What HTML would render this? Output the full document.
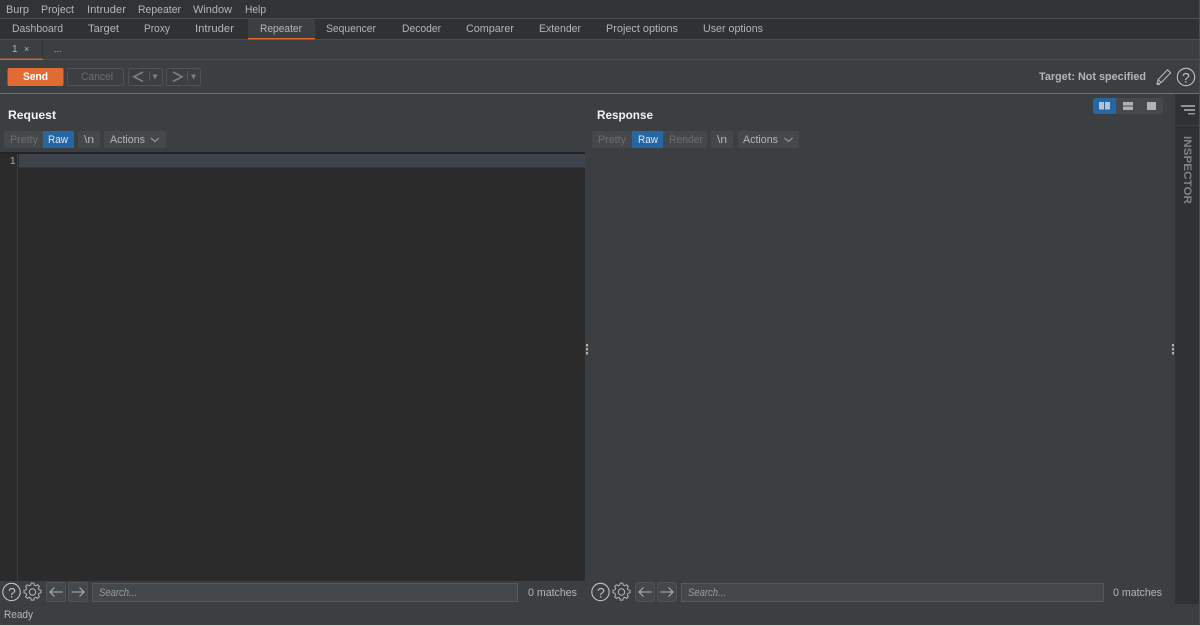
<!DOCTYPE html>
<html><head><meta charset="utf-8"><title>Burp Suite Repeater</title>
<style>
html,body{margin:0;padding:0;background:#3c3f41;width:1200px;height:626px;overflow:hidden}
svg{display:block;filter:blur(.3px)}
text{font-family:"Liberation Sans",sans-serif;font-size:11px;fill:#b4b6b6;dominant-baseline:alphabetic}
.b{font-weight:bold}
.dim{fill:#6b6d6e}
</style></head><body>
<svg width="1200" height="626" viewBox="0 0 1200 626" xmlns="http://www.w3.org/2000/svg">
<rect width="1200" height="626" fill="#3c3f41"/>
<!-- menu bar -->
<rect width="1200" height="18" fill="#323334"/>
<rect y="18" width="1200" height="1" fill="#4a4c4e"/>
<text x="6" y="13" textLength="23" lengthAdjust="spacingAndGlyphs">Burp</text>
<text x="41" y="13" textLength="33" lengthAdjust="spacingAndGlyphs">Project</text>
<text x="87" y="13" textLength="39" lengthAdjust="spacingAndGlyphs">Intruder</text>
<text x="138" y="13" textLength="43" lengthAdjust="spacingAndGlyphs">Repeater</text>
<text x="193" y="13" textLength="39" lengthAdjust="spacingAndGlyphs">Window</text>
<text x="245" y="13" textLength="21" lengthAdjust="spacingAndGlyphs">Help</text>
<!-- main tabs -->
<rect y="19" width="1200" height="20" fill="#2f3132"/>
<rect y="39" width="1200" height="1" fill="#4a4c4e"/>
<rect x="248" y="19" width="67" height="19" fill="#3c3f41"/>
<rect x="248" y="38" width="67" height="1.4" fill="#e2672f"/>
<text x="12" y="32" textLength="51" lengthAdjust="spacingAndGlyphs">Dashboard</text>
<text x="88" y="32" textLength="31" lengthAdjust="spacingAndGlyphs">Target</text>
<text x="144" y="32" textLength="26" lengthAdjust="spacingAndGlyphs">Proxy</text>
<text x="195" y="32" textLength="39" lengthAdjust="spacingAndGlyphs">Intruder</text>
<text x="260" y="32" textLength="42" lengthAdjust="spacingAndGlyphs">Repeater</text>
<text x="326" y="32" textLength="50" lengthAdjust="spacingAndGlyphs">Sequencer</text>
<text x="402" y="32" textLength="39" lengthAdjust="spacingAndGlyphs">Decoder</text>
<text x="466" y="32" textLength="48" lengthAdjust="spacingAndGlyphs">Comparer</text>
<text x="539" y="32" textLength="42" lengthAdjust="spacingAndGlyphs">Extender</text>
<text x="606" y="32" textLength="72" lengthAdjust="spacingAndGlyphs">Project options</text>
<text x="703" y="32" textLength="60" lengthAdjust="spacingAndGlyphs">User options</text>
<!-- sub tabs -->
<rect y="59" width="1200" height="1" fill="#4b4e50"/>
<rect x="42" y="40" width="1" height="19" fill="#333537"/>
<rect x="0" y="58.6" width="43" height="1.4" fill="#e2672f"/>
<text x="12" y="52" style="font-size:10px" fill="#c0c2c2">1</text>
<text x="24" y="52" style="font-size:9px">×</text>
<text x="54" y="52" style="font-size:9px">...</text>
<!-- toolbar -->
<rect x="7.5" y="68" width="56" height="18" rx="2" fill="#e26b34"/>
<text x="23" y="80" class="b" textLength="25" lengthAdjust="spacingAndGlyphs" style="fill:#fff">Send</text>
<rect x="67.5" y="68.5" width="56" height="17" rx="2" fill="#3c3f41" stroke="#505355"/>
<text x="81" y="80" textLength="32" lengthAdjust="spacingAndGlyphs" class="dim">Cancel</text>
<rect x="128.500" y="68.5" width="34" height="17" rx="2" fill="none" stroke="#505355"/>
<path d="M143 72L134 76.700L143 81.500" fill="none" stroke="#7b7d7e" stroke-width="1.700"/>
<rect x="149" y="71" width="1" height="10" fill="#56595b"/>
<path d="M152.500 74.500h5l-2.500 5z" fill="#7b7d7e"/>
<rect x="166.500" y="68.500" width="34" height="17" rx="2" fill="none" stroke="#505355"/>
<path d="M173 72L182 76.700L173 81.500" fill="none" stroke="#7b7d7e" stroke-width="1.700"/>
<rect x="187" y="71" width="1" height="10" fill="#56595b"/>
<path d="M191 74.500h5l-2.500 5z" fill="#7b7d7e"/>
<text x="1039" y="80" class="b" textLength="107" lengthAdjust="spacingAndGlyphs">Target: Not specified</text>
<path d="M1157 84l1.200-4.500 9.300-9.700 3.200 3-9.400 9.700zM1158.200 79.500l3.100 3.300M1157 84.500h3" fill="none" stroke="#b4b6b6" stroke-width="1.100"/>
<circle cx="1186" cy="77" r="8.700" fill="none" stroke="#c0c2c2" stroke-width="1.100"/>
<text x="1182" y="82.500" style="font-size:14px;fill:#c0c2c2">?</text>
<rect y="93" width="1200" height="1" fill="#6f7274"/>
<!-- layout toggles -->
<rect x="1093" y="98" width="70" height="16" rx="3" fill="#46484a"/>
<path d="M1096 98h20v16h-20a3 3 0 0 1-3-3v-10a3 3 0 0 1 3-3z" fill="#2566a4"/>
<rect x="1099" y="102" width="5" height="7.500" fill="#b9c4ce"/><rect x="1105" y="102" width="5" height="7.500" fill="#b9c4ce"/>
<rect x="1123" y="102" width="10" height="3.500" fill="#b0b2b3"/><rect x="1123" y="106.500" width="10" height="3.500" fill="#b0b2b3"/>
<rect x="1147" y="102" width="9" height="8" fill="#b0b2b3"/>
<!-- inspector -->
<rect x="1175" y="94" width="24" height="510" fill="#303132"/>
<rect x="1175" y="125" width="24" height="1" fill="#3c3f41"/>
<rect x="1181" y="105" width="14" height="2" fill="#8f9192"/>
<rect x="1184" y="109" width="11" height="2" fill="#8f9192"/>
<rect x="1188" y="113" width="7" height="1.500" fill="#8f9192"/>
<text transform="translate(1184,136) rotate(90)" class="b" textLength="68" lengthAdjust="spacingAndGlyphs" style="fill:#808283">INSPECTOR</text>
<rect x="1199" y="0" width="1" height="626" fill="#4a4c4e"/>
<!-- request -->
<text x="8" y="119" class="b" style="font-size:12px;fill:#f2f2f2" textLength="48" lengthAdjust="spacingAndGlyphs">Request</text>
<rect x="4" y="131" width="70" height="17" rx="2" fill="#45484a"/>
<path d="M43 131h29a2 2 0 0 1 2 2v13a2 2 0 0 1-2 2h-29z" fill="#2566a4"/>
<text x="10" y="143" class="dim" textLength="28" lengthAdjust="spacingAndGlyphs">Pretty</text>
<text x="48" y="143" textLength="20" lengthAdjust="spacingAndGlyphs" style="fill:#dfe6ec">Raw</text>
<rect x="78" y="131" width="22" height="17" rx="2" fill="#45484a"/>
<text x="84" y="143" textLength="10" lengthAdjust="spacingAndGlyphs">\n</text>
<rect x="104" y="131" width="62" height="17" rx="2" fill="#45484a"/>
<text x="110" y="143" textLength="35" lengthAdjust="spacingAndGlyphs">Actions</text>
<path d="M151 138l4 3.500 4-3.500" fill="none" stroke="#8f9192" stroke-width="1.300"/>
<!-- editor -->
<rect x="0" y="152" width="585" height="429" fill="#2b2b2b"/>
<rect x="0" y="152" width="585" height="2" fill="#232425"/>
<rect x="17" y="154" width="1" height="427" fill="#3d3f40"/>
<rect x="19" y="154" width="566" height="13.500" fill="#3f434c"/>
<text x="10" y="164" style="font-size:10px;fill:#a8aaab">1</text>
<!-- dividers -->
<g fill="#b0b2b3"><rect x="586" y="344" width="2" height="2.500"/><rect x="586" y="348" width="2" height="2.500"/><rect x="586" y="352" width="2" height="2.500"/>
<rect x="1172" y="344" width="2" height="2.500"/><rect x="1172" y="348" width="2" height="2.500"/><rect x="1172" y="352" width="2" height="2.500"/></g>
<!-- response -->
<text x="597" y="119" class="b" style="font-size:12px;fill:#f2f2f2" textLength="56" lengthAdjust="spacingAndGlyphs">Response</text>
<rect x="592" y="131" width="115" height="17" rx="2" fill="#45484a"/>
<rect x="632" y="131" width="31" height="17" fill="#2566a4"/>
<text x="598" y="143" class="dim" textLength="28" lengthAdjust="spacingAndGlyphs">Pretty</text>
<text x="638" y="143" textLength="20" lengthAdjust="spacingAndGlyphs" style="fill:#dfe6ec">Raw</text>
<text x="669" y="143" class="dim" textLength="34" lengthAdjust="spacingAndGlyphs">Render</text>
<rect x="711" y="131" width="22" height="17" rx="2" fill="#45484a"/>
<text x="717" y="143" textLength="10" lengthAdjust="spacingAndGlyphs">\n</text>
<rect x="738" y="131" width="61" height="17" rx="2" fill="#45484a"/>
<text x="743" y="143" textLength="35" lengthAdjust="spacingAndGlyphs">Actions</text>
<path d="M784.500 138l4 3.500 4-3.500" fill="none" stroke="#8f9192" stroke-width="1.300"/>
<!-- help + gear -->
<g fill="none" stroke="#b4b6b6">
<circle cx="11.500" cy="592" r="8.700" stroke="#c0c2c2" stroke-width="1.100"/>
<circle cx="600.500" cy="592" r="8.700" stroke="#c0c2c2" stroke-width="1.100"/>
<path transform="translate(32.500,592) scale(.85)" stroke-width="1.150" d="M-1.500-10.500h3l.5 2.300 2 .9 2-1.300 2.100 2.100-1.300 2 .9 2 2.300.5v3l-2.300.5-.9 2 1.300 2-2.100 2.100-2-1.300-2 .9-.5 2.300h-3l-.5-2.300-2-.9-2 1.300-2.100-2.100 1.300-2-.9-2-2.300-.5v-3l2.300-.5.9-2-1.300-2 2.100-2.100 2 1.300 2-.9z" />
<circle cx="32.500" cy="592" r="3.200"/>
<path transform="translate(621.500,592) scale(.85)" stroke-width="1.150" d="M-1.500-10.500h3l.5 2.300 2 .9 2-1.300 2.100 2.100-1.300 2 .9 2 2.300.5v3l-2.300.5-.9 2 1.300 2-2.100 2.100-2-1.300-2 .9-.5 2.300h-3l-.5-2.300-2-.9-2 1.300-2.100-2.100 1.300-2-.9-2-2.300-.5v-3l2.300-.5.9-2-1.300-2 2.100-2.100 2 1.300 2-.9z" />
<circle cx="621.500" cy="592" r="3.200"/>
</g>
<text x="8" y="597.500" style="font-size:14px;fill:#c0c2c2">?</text>
<text x="597" y="597.500" style="font-size:14px;fill:#c0c2c2">?</text>
<!-- request search -->
<rect x="46.500" y="582.500" width="19" height="19" rx="2" fill="#45484a" stroke="#505355"/>
<rect x="68.500" y="582.500" width="19" height="19" rx="2" fill="#45484a" stroke="#505355"/>
<path d="M62.500 592H50M54.500 587.500L50 592l4.500 4.500M71.500 592H84M79.500 587.500L84 592l-4.500 4.500" fill="none" stroke="#b0b2b3" stroke-width="1.100"/>
<rect x="92.500" y="583.500" width="425" height="18" fill="#45484a" stroke="#56595b"/>
<text x="99" y="596" style="font-style:italic;fill:#9a9c9d" textLength="38" lengthAdjust="spacingAndGlyphs">Search...</text>
<text x="528" y="596" textLength="49" lengthAdjust="spacingAndGlyphs">0 matches</text>
<!-- response search -->
<rect x="635.500" y="582.500" width="19" height="19" rx="2" fill="#45484a" stroke="#505355"/>
<rect x="657.500" y="582.500" width="19" height="19" rx="2" fill="#45484a" stroke="#505355"/>
<path d="M651.500 592H639M643.500 587.500L639 592l4.500 4.500M660.500 592H673M668.500 587.500L673 592l-4.500 4.500" fill="none" stroke="#b0b2b3" stroke-width="1.100"/>
<rect x="681.500" y="583.500" width="422" height="18" fill="#45484a" stroke="#56595b"/>
<text x="688" y="596" style="font-style:italic;fill:#9a9c9d" textLength="38" lengthAdjust="spacingAndGlyphs">Search...</text>
<text x="1113" y="596" textLength="49" lengthAdjust="spacingAndGlyphs">0 matches</text>
<!-- status -->
<text x="4" y="618" textLength="29" lengthAdjust="spacingAndGlyphs">Ready</text>
<rect y="625" width="1200" height="1" fill="#d8d8d8"/>
</svg>
</body></html>
